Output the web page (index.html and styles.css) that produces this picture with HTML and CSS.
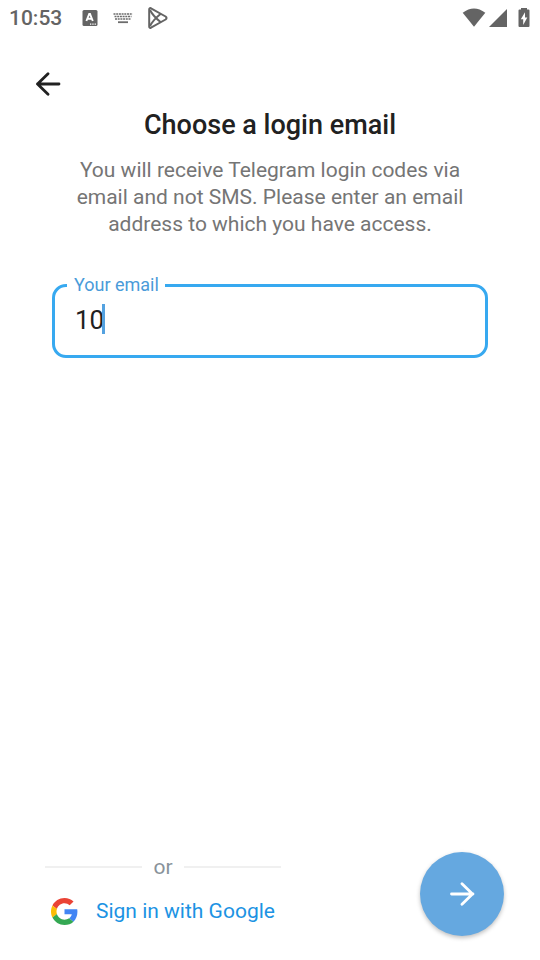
FILE: index.html
```html
<!DOCTYPE html>
<html lang="en">
<head>
<meta charset="utf-8">
<meta name="viewport" content="width=device-width, initial-scale=1">
<title>Choose a login email</title>
<link rel="stylesheet" href="styles.css">
</head>
<body>
<div class="screen">
  <div class="status">
    <span class="time">10:53</span>
    <div class="notices">
      <svg width="16" height="16" viewBox="0 0 16 16" aria-hidden="true">
        <rect x="0.5" y="0" width="15" height="16" rx="1.5" fill="#646464"/>
        <path d="M4.400 11 7.200 4h.8l2.800 7M5.600 8.700h4.200" fill="none" stroke="#fff" stroke-width="1.900"/>
        <path d="M8 14.200h1.300m1 0h1.300m1 0h1.300" stroke="#fff" stroke-width="1.300"/>
      </svg>
      <svg width="20" height="12" viewBox="0 0 20 12" aria-hidden="true" fill="none" stroke="#6c6c6c">
        <path d="M.5 2h19M1.500 4.500h17M2 7h16" stroke-width="1.700" stroke-dasharray="2 .7"/>
        <path d="M5 10.200h10" stroke-width="1.800"/>
      </svg>
      <svg width="20" height="22" viewBox="0 0 20 22" aria-hidden="true" fill="none" stroke="#646464" stroke-width="2" stroke-linejoin="round">
        <path d="M1.200 2.500Q1.200.6 3 1.300L17.600 9.500Q19.500 11 17.600 12.500L3 20.700Q1.200 21.400 1.200 19.500Z"/>
        <path d="M2 3Q5 9 12.800 15.300M2 19Q5 13 12.800 6.700"/>
      </svg>
    </div>
    <div class="system">
      <svg width="24" height="20" viewBox="0 0 24 20" aria-hidden="true"><path d="M.7 4.800Q12-3.800 23.300 4.800L12 18.800Z" fill="#646464"/></svg>
      <svg width="18" height="20" viewBox="0 0 18 20" aria-hidden="true"><path d="M0 19 18 1v18Z" fill="#646464"/></svg>
      <svg width="12" height="20" viewBox="0 0 12 20" aria-hidden="true">
        <path d="M3 0h6v1.500h1.500q1 0 1 1v15.500q0 1-1 1h-9q-1 0-1-1V2.500q0-1 1-1H3Z" fill="#646464"/>
        <path d="M7 4.300 2.800 11.300h2.400V17L9.300 9.500H7Z" fill="#fff"/>
      </svg>
    </div>
  </div>
  <header class="bar">
    <button class="back" type="button" aria-label="Back">
      <svg width="26" height="24" viewBox="0 0 26 24" fill="none" stroke="#212121" stroke-width="2.800" stroke-linecap="round" stroke-linejoin="round"><path d="M24 12H2.500M13 1.700 2.500 12l10.500 10.300"/></svg>
    </button>
  </header>
  <main class="content">
    <h1 class="title">Choose a login email</h1>
    <p class="text">You will receive Telegram login codes via email and not SMS. Please enter an email address to which you have access.</p>
    <fieldset class="field">
      <legend class="notch"><label for="email">Your email</label></legend>
      <div class="entry">
        <input id="email" class="input" type="text" inputmode="email" value="10">
        <span class="caret"></span>
      </div>
    </fieldset>
  </main>
  <footer class="footer">
    <div class="alternate">
      <div class="divider"><span>or</span></div>
      <a class="google" href="#">
        <svg width="27" height="27" viewBox="0 0 48 48" aria-hidden="true">
          <path fill="#ea4335" d="M24 9.500c3.540 0 6.710 1.220 9.210 3.600l6.850-6.850C35.900 2.380 30.470 0 24 0 14.620 0 6.510 5.380 2.560 13.220l7.980 6.190C12.430 13.720 17.740 9.500 24 9.500z"/>
          <path fill="#4285f4" d="M46.980 24.550c0-1.570-.15-3.090-.38-4.550H24v9.020h12.940c-.58 2.960-2.260 5.480-4.780 7.180l7.730 6c4.510-4.180 7.090-10.360 7.090-17.650z"/>
          <path fill="#fbbc05" d="M10.530 28.590c-.48-1.450-.76-2.990-.76-4.590s.27-3.140.76-4.590l-7.980-6.190C.92 16.460 0 20.120 0 24c0 3.880.92 7.540 2.560 10.780l7.970-6.190z"/>
          <path fill="#34a853" d="M24 48c6.480 0 11.930-2.130 15.890-5.810l-7.730-6c-2.150 1.450-4.920 2.300-8.160 2.300-6.260 0-11.570-4.220-13.470-9.910l-7.980 6.190C6.510 42.620 14.620 48 24 48z"/>
        </svg>
        <span>Sign in with Google</span>
      </a>
    </div>
    <button class="next" type="button" aria-label="Next">
      <svg width="26" height="24" viewBox="0 0 26 24" fill="none" stroke="#fff" stroke-width="2.800" stroke-linecap="round" stroke-linejoin="round"><path d="M2.500 12H24M13 1.700 23.500 12 13 22.300"/></svg>
    </button>
  </footer>
</div>
</body>
</html>
```
FILE: styles.css
```css
* {
  box-sizing: border-box;
}

body {
  margin: 0;
  background: #fff;
  color: #212121;
  font-family: Roboto, "Liberation Sans", sans-serif;
}

button {
  display: flex;
  align-items: center;
  justify-content: center;
  padding: 0;
  border: 0;
  background: none;
  cursor: pointer;
}

svg {
  display: block;
  flex: none;
}

.screen {
  display: flex;
  flex-direction: column;
  min-height: 100vh;
}

.status {
  display: flex;
  align-items: center;
  height: 36px;
  padding: 0 9px;
}

.time {
  color: #646464;
  font-size: 21px;
  font-weight: 500;
  line-height: 38px;
}

.notices {
  display: flex;
  align-items: center;
  gap: 15px;
  margin-left: 20px;
}

.system {
  display: flex;
  align-items: center;
  gap: 3px;
  margin: 0 1px 0 auto;
}

.system svg:last-child {
  margin-left: 8px;
}

.bar {
  padding: 24px 24px 0;
}

.back {
  width: 48px;
  height: 48px;
}

.content {
  padding: 0 52px;
}

.title {
  margin: 0;
  font-size: 27px;
  font-weight: 500;
  line-height: 34px;
  text-align: center;
}

.text {
  max-width: 400px;
  margin: 15px auto 0;
  color: #757575;
  font-size: 21px;
  line-height: 27px;
  text-align: center;
}

.field {
  min-width: 0;
  margin: 37px 0 0;
  padding: 0 20px;
  border: 3px solid #37a9f0;
  border-radius: 14px;
}

.notch {
  margin-left: -8px;
  padding: 0 6px 0 7px;
  color: #4a9bd9;
  font-size: 18px;
  line-height: 20px;
}

.entry {
  position: relative;
  height: 60px;
  padding-top: 9px;
}

.input {
  display: block;
  width: 100%;
  height: 32px;
  padding: 0;
  border: 0;
  outline: 0;
  background: none;
  color: #212121;
  font: 26px/32px Roboto, "Liberation Sans", sans-serif;
}

.caret {
  position: absolute;
  top: 9px;
  left: 27px;
  width: 3px;
  height: 30px;
  background: #54a2e0;
}

.footer {
  display: flex;
  align-items: flex-end;
  justify-content: space-between;
  margin-top: auto;
  padding: 0 36px 24px 45px;
}

.alternate {
  width: 236px;
}

.divider {
  display: flex;
  align-items: center;
  gap: 11px;
  color: #89929a;
  font-size: 21px;
  line-height: 26px;
}

.divider::before,
.divider::after {
  flex: 1;
  height: 2px;
  background: #f0f0f0;
  content: "";
}

.google {
  display: flex;
  align-items: center;
  gap: 18px;
  height: 50px;
  margin-top: 6px;
  padding-left: 6px;
  color: #1c93e3;
  font-size: 21px;
  text-decoration: none;
  white-space: nowrap;
}

.next {
  width: 84px;
  height: 84px;
  border-radius: 50%;
  background: #65a8e0;
  box-shadow: 0 2px 4px rgba(0, 0, 0, 0.25);
}
```
